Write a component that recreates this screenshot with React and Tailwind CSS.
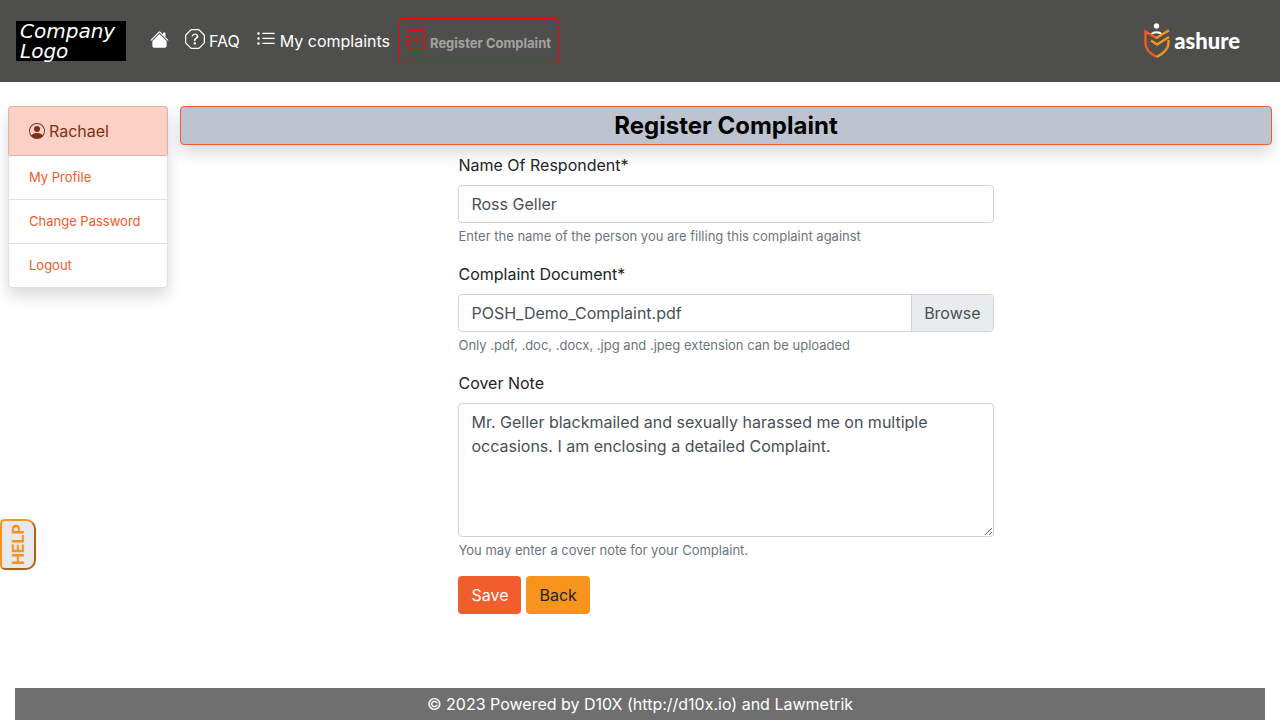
import React, { useState } from "react";
import {
  BsHouseFill,
  BsQuestionOctagon,
  BsListUl,
  BsJournalX,
  BsPersonCircle,
} from "react-icons/bs";

function AshureMark() {
  return (
    <svg viewBox="0 0 26 36" className="h-9 w-[26px]" fill="none" aria-hidden="true">
      <circle cx="12.5" cy="3" r="2.7" fill="#fff" />
      <path d="M7 11.400c3-2.900 8-2.900 11 0" stroke="#fff" strokeWidth="2" />
      <path
        d="M12.500 34C5.500 30.500 1.500 26.500 1.500 20V8.500l11 6.500"
        stroke="#f15a29"
        strokeWidth="2.400"
      />
      <path
        d="M12.500 34C19.500 30.500 24.500 26.500 24.500 20v-3"
        stroke="#f7941d"
        strokeWidth="2.400"
      />
      <path d="M12 15.300l13-8" stroke="#f7941d" strokeWidth="2.400" />
      <path d="M7 17.500l6 4 12-7.500" stroke="#f7941d" strokeWidth="2.400" />
    </svg>
  );
}

function Header() {
  return (
    <header className="flex h-[82px] items-center bg-[#4e4e4c] pl-4 pr-10 text-white">
      <a
        href="#company"
        className="mr-4 block w-[110px] bg-black px-1 font-['DejaVu_Sans',sans-serif] text-xl italic leading-5"
      >
        <span className="block">Company</span>
        <span className="block">Logo</span>
      </a>
      <nav className="flex items-center">
        <a href="#home" aria-label="Home" className="px-2">
          <BsHouseFill className="mb-1 size-[19px]" />
        </a>
        <a href="#faq" className="flex items-center gap-1 px-2">
          <BsQuestionOctagon className="mb-1 size-5" />
          FAQ
        </a>
        <a href="#complaints" className="flex items-center gap-1 px-2">
          <BsListUl className="mb-1 size-5" />
          My complaints
        </a>
        <a
          href="#register"
          className="flex h-[46px] items-center gap-1 rounded border border-[#f00] px-[7px] text-[13px] font-bold text-[#a3a3a2]"
        >
          <BsJournalX className="mb-0.5 size-5 text-[#f00]" />
          <span className="pt-1.5">Register Complaint</span>
        </a>
      </nav>
      <a href="#ashure" className="ml-auto flex items-center gap-1">
        <AshureMark />
        <span className="font-['Lato',sans-serif] text-[22px] font-black leading-6">
          ashure
        </span>
      </a>
    </header>
  );
}

function Sidebar() {
  const link = "block border-t px-5 py-3 text-[13px] leading-[19px] text-[#f15a29]";
  return (
    <aside className="self-start rounded border border-[#dfdfdf] bg-white shadow-[0_8px_16px_rgba(0,0,0,0.15)]">
      <div className="-mx-px -mt-px flex items-center gap-1 rounded-t border border-b-0 border-[#dcb5a8] bg-[#fcd1c5] px-5 py-3 text-[#7d2f15]">
        <BsPersonCircle className="size-4" />
        Rachael
      </div>
      <a href="#profile" className={`${link} border-[#dcb5a8]`}>
        My Profile
      </a>
      <a href="#password" className={`${link} border-[#dfdfdf]`}>
        Change Password
      </a>
      <a href="#logout" className={`${link} border-[#dfdfdf]`}>
        Logout
      </a>
    </aside>
  );
}

function Field({ id, label, help, children }) {
  return (
    <div className="mb-4">
      <label htmlFor={id} className="mb-2 block text-[#212529]">
        {label}
      </label>
      {children}
      <p className="mt-1 text-[13px] leading-[19px] text-[#6c757d]">{help}</p>
    </div>
  );
}

function ComplaintForm() {
  const [file, setFile] = useState("POSH_Demo_Complaint.pdf");
  const control = "block w-full rounded border border-[#ced4da] bg-white px-3 text-[#495057]";
  return (
    <form className="mx-auto mt-2 w-[49%]" onSubmit={(e) => e.preventDefault()}>
      <Field
        id="respondent"
        label="Name Of Respondent*"
        help="Enter the name of the person you are filling this complaint against"
      >
        <input id="respondent" type="text" defaultValue="Ross Geller" className={`${control} h-[38px]`} />
      </Field>
      <Field
        id="document"
        label="Complaint Document*"
        help="Only .pdf, .doc, .docx, .jpg and .jpeg extension can be uploaded"
      >
        <input
          id="document"
          type="file"
          className="sr-only"
          onChange={(e) => e.target.files[0] && setFile(e.target.files[0].name)}
        />
        <label
          htmlFor="document"
          className="flex h-[38px] cursor-pointer overflow-hidden rounded border border-[#ced4da] bg-white text-[#495057]"
        >
          <span className="flex-1 truncate px-3 py-1.5">{file}</span>
          <span className="border-l border-[#ced4da] bg-[#e9ecef] px-3 py-1.5">Browse</span>
        </label>
      </Field>
      <Field id="note" label="Cover Note" help="You may enter a cover note for your Complaint.">
        <textarea
          id="note"
          className={`${control} h-[134px] resize py-1.5`}
          defaultValue="Mr. Geller blackmailed and sexually harassed me on multiple occasions. I am enclosing a detailed Complaint."
        />
      </Field>
      <div className="flex gap-[5px]">
        <button type="submit" className="h-[38px] rounded bg-[#f15d2d] px-[13px] text-white">
          Save
        </button>
        <button type="button" className="h-[38px] rounded bg-[#f7941d] px-[13px] text-[#212529]">
          Back
        </button>
      </div>
    </form>
  );
}

export default function App() {
  return (
    <div className="flex min-h-screen flex-col bg-white font-['Inter',sans-serif] text-base">
      <Header />
      <div className="grid grid-cols-[160px_1fr] gap-3 px-2 pb-6 pt-6">
        <Sidebar />
        <main>
          <h1 className="rounded border border-[#f15a29] bg-[#bdc4d0] text-center text-2xl font-bold leading-[37px] text-black shadow-[0_8px_16px_rgba(0,0,0,0.15)]">
            Register Complaint
          </h1>
          <ComplaintForm />
        </main>
      </div>
      <footer className="mx-[15px] mt-auto bg-[#6f6f6f] py-1 text-center text-white">
        © 2023 Powered by D10X (http://d10x.io) and Lawmetrik
      </footer>
      <button
        type="button"
        className="fixed left-0 top-[519px] flex h-[51px] w-9 items-center justify-center rounded-l-[5px] rounded-r-[10px] border-2 border-b-[#ac6513] border-l-[#f7941d] border-r-[#ac6513] border-t-[#f7941d] bg-[#e9e9ed] font-bold text-[#f7941d]"
      >
        <span className="rotate-180 [writing-mode:vertical-rl]">HELP</span>
      </button>
    </div>
  );
}
